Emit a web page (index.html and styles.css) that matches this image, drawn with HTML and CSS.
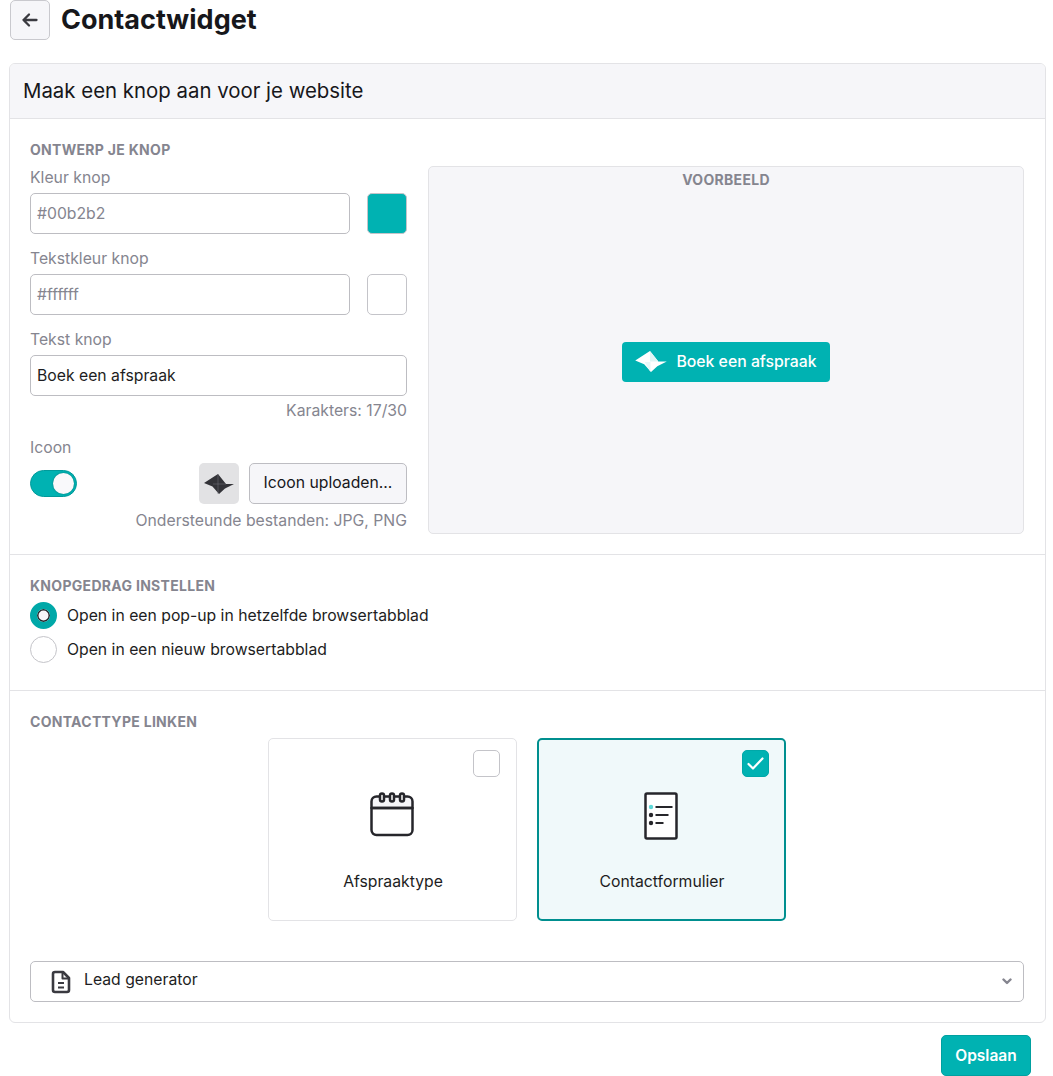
FILE: index.html
```html
<!DOCTYPE html>
<html lang="nl">
<head>
<meta charset="utf-8">
<title>Contactwidget</title>
<link rel="stylesheet" href="styles.css">
</head>
<body>
<header class="page-head">
  <button class="back" aria-label="Terug">
    <svg width="18" height="18" viewBox="0 0 18 18" fill="none" stroke="#3a3a40" stroke-width="2.300" stroke-linecap="round" stroke-linejoin="round"><path d="M15.5 9H2.500M8 3.500 2.500 9 8 14.500"/></svg>
  </button>
  <h1>Contactwidget</h1>
</header>
<main class="card">
  <div class="card-head">Maak een knop aan voor je website</div>
  <section class="design">
    <div class="form-col">
      <h2 class="sec-title">Ontwerp je knop</h2>
      <label class="label first">Kleur knop</label>
      <div class="color-row">
        <div class="input muted">#00b2b2</div>
        <span class="swatch teal"></span>
      </div>
      <label class="label">Tekstkleur knop</label>
      <div class="color-row">
        <div class="input muted">#ffffff</div>
        <span class="swatch"></span>
      </div>
      <label class="label">Tekst knop</label>
      <div class="input">Boek een afspraak</div>
      <div class="hint count">Karakters: 17/30</div>
      <label class="label icon-label">Icoon</label>
      <div class="icon-row">
        <span class="toggle"><span class="knob"></span></span>
        <span class="icon-tile">
          <svg width="30" height="20" viewBox="0 0 30 20"><path d="M0 9 14 0 22 10H30L21 14.500 15 20 8.500 12.500Z" fill="#333338"/><path d="M14 0V20M9 10H22" stroke="#77777d" stroke-width=".5"/></svg>
        </span>
        <button class="upload"><span class="upload-text">Icoon uploaden...</span></button>
      </div>
      <div class="hint formats">Ondersteunde bestanden: JPG, PNG</div>
    </div>
    <div class="preview">
      <div class="preview-title">Voorbeeld</div>
      <div class="preview-stage">
        <span class="demo-btn">
          <svg width="32" height="21" viewBox="0 0 30 20"><path d="M0 9 14 0 22 10H30L21 14.500 15 20 8.500 12.500Z" fill="#fff"/><path d="M14 0 22 10H14Z" fill="#dff5f5"/><path d="M14.500 20V10.500H9Z" fill="#e8f8f8"/></svg>
          Boek een afspraak
        </span>
      </div>
    </div>
  </section>
  <section class="behaviour">
    <h2 class="sec-title">Knopgedrag instellen</h2>
    <div class="radio-row first-radio"><span class="radio on"></span>Open in een pop-up in hetzelfde browsertabblad</div>
    <div class="radio-row"><span class="radio"></span>Open in een nieuw browsertabblad</div>
  </section>
  <section class="link">
    <h2 class="sec-title">Contacttype linken</h2>
    <div class="types">
      <div class="type">
        <span class="check"></span>
        <svg class="type-icon" width="44" height="46" viewBox="0 0 44 46" fill="none" stroke="#26262b" stroke-width="2.500" stroke-linejoin="round">
          <path d="M1.500 16V9.500A5 5 0 0 1 6.500 4.500H37.500A5 5 0 0 1 42.500 9.500V16Z" fill="#f5f5f8"/>
          <path d="M1.500 16H42.500V38A5 5 0 0 1 37.500 43H6.500A5 5 0 0 1 1.500 38Z"/>
          <rect x="10" y="1.500" width="4" height="8" rx="2" fill="#fff"/><rect x="20" y="1.500" width="4" height="8" rx="2" fill="#fff"/><rect x="30" y="1.500" width="4" height="8" rx="2" fill="#fff"/>
        </svg>
        <span class="type-name">Afspraaktype</span>
      </div>
      <div class="type selected">
        <span class="check on">
          <svg width="17" height="13" viewBox="0 0 17 13" fill="none" stroke="#fff" stroke-width="2.200" stroke-linecap="round" stroke-linejoin="round"><path d="M1.500 7 6 11.500 15.500 1.500"/></svg>
        </span>
        <svg class="type-icon" width="34" height="48" viewBox="0 0 34 48" fill="none" stroke="#26262b" stroke-width="2.500" stroke-linejoin="round">
          <rect x="1.500" y="1.500" width="31" height="45" rx="1.500" fill="#fff"/>
          <circle cx="7" cy="15" r="2.200" fill="#5fd8d8" stroke="none"/><circle cx="7" cy="23" r="2.200" fill="#26262b" stroke="none"/><circle cx="7" cy="31" r="2.200" fill="#26262b" stroke="none"/>
          <path d="M11.500 15H28.500M11.500 23H24.500M11.500 31H19.500" stroke-width="2"/>
        </svg>
        <span class="type-name">Contactformulier</span>
      </div>
    </div>
    <div class="select">
      <svg width="20" height="24" viewBox="0 0 20 24" fill="none" stroke="#3a3a40" stroke-width="2.600" stroke-linejoin="round"><path d="M2 4A2 2 0 0 1 4 2H12L18 8V20A2 2 0 0 1 16 22H4A2 2 0 0 1 2 20Z"/><path d="M11.500 2V8.500H18" stroke-width="2"/><path d="M7 13H13M7 17.500H13" stroke-width="2"/></svg>
      <span class="select-value">Lead generator</span>
      <svg class="chev" width="10" height="7" viewBox="0 0 10 7" fill="none" stroke="#85858f" stroke-width="2.400" stroke-linecap="round" stroke-linejoin="round"><path d="M1.500 1.500 5 5 8.500 1.500"/></svg>
    </div>
  </section>
</main>
<footer class="actions"><button class="save">Opslaan</button></footer>
</body>
</html>
```
FILE: styles.css
```css
* { box-sizing: border-box; }
html, body { margin: 0; height: 1076px; overflow: hidden; }
body { font-family: Inter, "Liberation Sans", sans-serif; font-size: 15.750px; color: #1d1d22; background: #fff; }
button { font-family: inherit; cursor: pointer; }

.page-head { display: flex; align-items: center; height: 40px; padding-left: 10px; gap: 11px; }
.back { width: 40px; height: 40px; padding: 0; display: flex; align-items: center; justify-content: center; background: #f6f6f9; border: 1px solid #c9c9ce; border-radius: 5px; }
h1 { margin: 0; font-size: 27px; font-weight: 700; line-height: 40px; color: #17171b; }

.card { width: 1037px; height: 960px; margin: 23px 0 0 9px; border: 1px solid #e3e3e6; border-radius: 6px; overflow: hidden; }
.card-head { height: 55px; padding: 0 13px; display: flex; align-items: center; font-size: 20.400px; line-height: 24px; color: #17171b; background: #f6f6f9; border-bottom: 1px solid #e3e3e6; }

.sec-title { margin: 0; font-size: 14px; line-height: 16px; font-weight: 700; letter-spacing: .3px; text-transform: uppercase; color: #85858f; }

.design { height: 436px; display: flex; gap: 21px; padding: 23px 21px 0 20px; border-bottom: 1px solid #e3e3e6; }
.form-col { width: 377px; flex: none; }
.label { display: block; height: 16px; margin: 17px 0 7px; font-size: 15.750px; line-height: 16px; color: #85858f; }
.label.first { margin-top: 12px; }
.color-row { display: flex; gap: 17px; }
.input { flex: 1; height: 41px; padding: 0 6px; display: flex; align-items: center; font-size: 15.750px; color: #1d1d22; background: #fff; border: 1px solid #bdbdc2; border-radius: 5px; }
.input.muted { color: #85858f; }
.swatch { width: 40px; height: 41px; flex: none; background: #fff; border: 1px solid #c4c4c9; border-radius: 5px; }
.swatch.teal { background: #00b2b2; }
.hint { font-size: 15.750px; line-height: 18px; text-align: right; color: #85858f; }
.count { margin-top: 6px; }
.label.icon-label { margin: 20px 0 7px; }
.icon-row { display: flex; align-items: flex-start; }
.toggle { width: 47px; height: 27px; margin-top: 7px; margin-right: auto; padding: 2px; display: flex; justify-content: flex-end; background: #00b2b2; border-radius: 14px; border: 1px solid #009a9a; }
.knob { width: 21px; height: 21px; background: #f9f9fb; border-radius: 50%; box-shadow: 0 0 2px rgba(0, 0, 0, .35); }
.icon-tile { width: 40px; height: 41px; margin-right: 10px; display: flex; align-items: center; justify-content: center; background: #e2e2e4; border-radius: 5px; }
.upload { width: 158px; height: 41px; padding: 0 0 2px; font-size: 15.750px; color: #17171b; background: #f6f6f9; border: 1px solid #bdbdc2; border-radius: 5px; }
.formats { margin-top: 8px; }

.preview { width: 596px; height: 368px; margin-top: 24px; flex: none; display: flex; flex-direction: column; background: #f6f6f9; border: 1px solid #e3e3e6; border-radius: 5px; }
.preview-title { margin-top: 5px; font-size: 14px; line-height: 16px; font-weight: 700; letter-spacing: .3px; text-transform: uppercase; text-align: center; color: #85858f; }
.preview-stage { flex: 1; display: flex; align-items: center; justify-content: center; padding-top: 2px; }
.demo-btn { display: flex; align-items: center; gap: 9px; height: 40px; padding: 0 13px 1px; font-size: 15.800px; font-weight: 500; color: #fff; background: #00b2b2; border-radius: 4px; }

.behaviour { height: 136px; padding: 23px 20px 0; border-bottom: 1px solid #e3e3e6; }
.radio-row { display: flex; align-items: center; gap: 10px; height: 27px; margin-top: 7px; font-size: 15.750px; color: #1d1d22; }
.first-radio { margin-top: 8px; }
.radio { width: 27px; height: 27px; flex: none; background: #fff; border: 1px solid #c4c4c9; border-radius: 50%; }
.radio.on { background: #f6f6f9; border: 7px solid #00a8a8; box-shadow: inset 0 0 0 1.500px #26262b; }

.link { padding: 23px 21px 0 20px; }
.types { display: flex; justify-content: center; gap: 20px; margin: 8px 0 40px; padding-right: 1px; }
.type { position: relative; width: 249px; height: 183px; display: flex; flex-direction: column; align-items: center; background: #fff; border: 1px solid #e3e3e6; border-radius: 5px; }
.type.selected { background: #f0f9fa; border: 2px solid #008f8f; }
.check { position: absolute; top: 11px; right: 16px; width: 27px; height: 27px; display: flex; align-items: center; justify-content: center; background: #fff; border: 1px solid #c4c4c9; border-radius: 5px; }
.selected .check { top: 10px; right: 15px; }
.check.on { background: #00b2b2; border-color: #00a8a8; }
.type-icon { position: absolute; top: 53px; left: 50%; transform: translateX(-50%); }
.selected .type-icon { top: 52px; }
.type-name { position: absolute; top: 134px; margin-left: 2px; font-size: 15.750px; line-height: 18px; color: #1d1d22; }
.selected .type-name { top: 133px; }

.select { height: 41px; display: flex; align-items: center; padding: 0 11px 0 20px; border: 1px solid #bdbdc2; border-radius: 5px; font-size: 15.750px; color: #1d1d22; }
.select-value { margin-left: 13px; flex: 1; padding-bottom: 4px; }

.actions { display: flex; justify-content: flex-end; padding: 12px 22px 0 0; }
.save { width: 90px; height: 41px; padding: 0; font-size: 15.500px; font-weight: 600; color: #fff; background: #00b2b2; border: 1px solid #00a0a0; border-radius: 5px; }
```
